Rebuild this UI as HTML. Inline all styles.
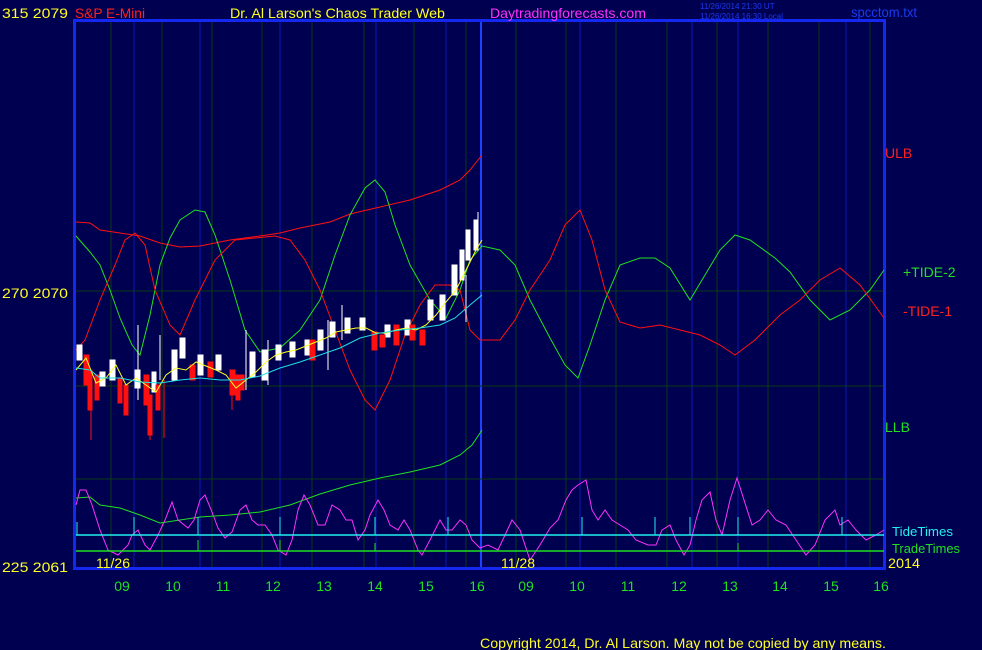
<!DOCTYPE html>
<html><head><meta charset="utf-8"><style>
html,body{margin:0;padding:0;background:#000050;width:982px;height:650px;overflow:hidden}
svg{display:block}
text{font-family:"Liberation Sans",sans-serif;font-size:14px}
</style></head><body>
<svg width="982" height="650" viewBox="0 0 982 650">
<rect width="982" height="650" fill="#000050"/>
<g stroke="#0a3a10" stroke-width="1">
<line x1="111" y1="21" x2="111" y2="568"/><line x1="162" y1="21" x2="162" y2="568"/><line x1="212" y1="21" x2="212" y2="568"/><line x1="262" y1="21" x2="262" y2="568"/><line x1="312" y1="21" x2="312" y2="568"/><line x1="364" y1="21" x2="364" y2="568"/><line x1="414" y1="21" x2="414" y2="568"/><line x1="466" y1="21" x2="466" y2="568"/><line x1="516" y1="21" x2="516" y2="568"/><line x1="566" y1="21" x2="566" y2="568"/><line x1="616" y1="21" x2="616" y2="568"/><line x1="667" y1="21" x2="667" y2="568"/><line x1="717" y1="21" x2="717" y2="568"/><line x1="768" y1="21" x2="768" y2="568"/><line x1="819" y1="21" x2="819" y2="568"/><line x1="870" y1="21" x2="870" y2="568"/>
</g>
<g stroke="#0a1ab0" stroke-width="1">
<line x1="134" y1="21" x2="134" y2="568"/><line x1="200" y1="21" x2="200" y2="568"/><line x1="280" y1="21" x2="280" y2="568"/><line x1="376" y1="21" x2="376" y2="568"/><line x1="446" y1="21" x2="446" y2="568"/><line x1="580" y1="21" x2="580" y2="568"/><line x1="692" y1="21" x2="692" y2="568"/><line x1="738" y1="21" x2="738" y2="568"/><line x1="846" y1="21" x2="846" y2="568"/>
</g>
<line x1="481" y1="21" x2="481" y2="568" stroke="#2040ff" stroke-width="2"/>
<g stroke="#0a3a10"><line x1="74" y1="291" x2="884" y2="291"/><line x1="74" y1="386" x2="884" y2="386"/><line x1="74" y1="479" x2="884" y2="479"/></g>
<rect x="74.5" y="20.5" width="810" height="548" fill="none" stroke="#1428f0" stroke-width="3"/>
<polyline fill="none" stroke="#ff1010" points="76,222 90,223 100,230 120,233 140,236 160,243 180,247 200,246 230,240 260,236 280,233 300,228 330,222 350,214 380,207 410,200 440,190 460,180 470,170 482,155"/>
<polyline fill="none" stroke="#20e020" points="76,498 90,497 100,505 120,508 140,515 160,523 180,520 200,517 230,515 260,512 290,505 320,494 350,485 380,478 410,472 440,465 460,455 472,445 482,430"/>
<polyline fill="none" stroke="#20e020" points="76,236 90,252 100,265 110,290 120,318 132,345 140,355 150,315 160,265 170,238 180,220 195,210 205,212 215,235 230,280 245,330 260,352 280,348 300,330 320,300 335,255 350,215 365,188 375,180 385,192 395,225 410,265 430,300 446,318 460,290 470,260 482,246 500,250 515,265 530,300 550,338 565,365 578,378 590,345 605,300 620,265 640,258 655,258 670,268 690,300 705,275 720,250 735,235 750,240 775,258 790,272 810,300 830,320 850,310 870,290 884,270"/>
<polyline fill="none" stroke="#ff1010" points="76,350 85,340 100,300 115,265 125,240 135,233 145,245 155,290 170,325 180,335 195,300 215,260 235,240 255,238 275,236 290,240 305,260 320,290 335,330 350,370 365,400 375,410 390,380 405,335 420,305 435,285 450,285 460,290 470,330 480,340 500,340 515,320 530,290 550,260 565,225 580,210 592,240 605,290 620,322 640,328 660,325 680,330 700,335 720,345 735,355 755,340 780,315 800,300 820,280 840,268 860,285 884,318"/>
<g fill="#fff" stroke="#fff" stroke-width="1">
<rect x="77" y="345" width="5" height="15"/><rect x="100" y="372" width="5" height="14"/><rect x="110" y="360" width="5" height="20"/><rect x="135" y="370" width="5" height="18"/><rect x="152" y="372" width="4" height="20"/><rect x="172" y="350" width="5" height="30"/><rect x="180" y="338" width="5" height="20"/><rect x="198" y="355" width="5" height="20"/><rect x="216" y="355" width="5" height="15"/><rect x="250" y="352" width="5" height="25"/><rect x="262" y="350" width="5" height="30"/><rect x="276" y="345" width="5" height="15"/><rect x="290" y="342" width="5" height="15"/><rect x="305" y="340" width="5" height="15"/><rect x="318" y="330" width="5" height="20"/><rect x="330" y="322" width="5" height="15"/><rect x="345" y="318" width="5" height="15"/><rect x="360" y="318" width="5" height="12"/><rect x="385" y="325" width="5" height="12"/><rect x="405" y="320" width="5" height="15"/><rect x="428" y="300" width="5" height="20"/><rect x="440" y="295" width="5" height="25"/><rect x="452" y="265" width="5" height="30"/><rect x="460" y="250" width="4" height="30"/><rect x="466" y="230" width="4" height="30"/><rect x="474" y="220" width="4" height="30"/>
<line x1="138" y1="325" x2="138" y2="400"/><line x1="160" y1="335" x2="160" y2="380"/><line x1="246" y1="330" x2="246" y2="390"/><line x1="268" y1="340" x2="268" y2="385"/><line x1="328" y1="320" x2="328" y2="370"/><line x1="342" y1="305" x2="342" y2="340"/><line x1="466" y1="275" x2="466" y2="322"/><line x1="478" y1="212" x2="478" y2="250"/></g>
<g fill="#ff1010" stroke="#ff1010" stroke-width="1">
<rect x="84" y="355" width="5" height="30"/><rect x="88" y="370" width="4" height="40"/><rect x="95" y="375" width="4" height="25"/><rect x="118" y="378" width="4" height="25"/><rect x="124" y="385" width="4" height="30"/><rect x="144" y="375" width="5" height="30"/><rect x="148" y="395" width="4" height="40"/><rect x="156" y="385" width="4" height="25"/><rect x="190" y="365" width="5" height="15"/><rect x="208" y="362" width="5" height="15"/><rect x="230" y="370" width="5" height="25"/><rect x="236" y="375" width="4" height="25"/><rect x="240" y="375" width="4" height="15"/><rect x="310" y="340" width="5" height="20"/><rect x="372" y="332" width="5" height="18"/><rect x="380" y="335" width="5" height="12"/><rect x="394" y="325" width="5" height="20"/><rect x="410" y="325" width="5" height="15"/><rect x="420" y="330" width="5" height="15"/>
<line x1="91" y1="380" x2="91" y2="440"/><line x1="150" y1="400" x2="150" y2="440"/><line x1="164" y1="380" x2="164" y2="438"/><line x1="232" y1="390" x2="232" y2="410"/></g>
<polyline fill="none" stroke="#ffff20" points="76,370 86,358 96,383 106,378 116,365 126,385 136,378 146,385 156,392 166,375 176,368 186,370 196,362 206,366 216,370 226,375 236,388 246,380 256,372 266,362 276,355 286,352 296,350 306,346 316,342 326,338 336,332 346,330 356,328 366,328 376,333 386,333 396,330 406,328 416,330 426,325 436,315 446,302 456,290 466,270 476,250 482,240"/>
<polyline fill="none" stroke="#20e0e0" points="76,368 90,370 100,378 120,378 140,382 160,383 180,380 200,378 220,380 240,380 260,376 280,368 300,362 320,355 340,348 360,338 380,333 400,330 420,328 440,325 455,318 470,305 482,295"/>
<polyline fill="none" stroke="#ff30ff" points="76,505 80,490 86,490 92,505 100,530 108,550 118,555 128,545 132,535 138,530 145,545 150,550 158,535 165,520 172,502 178,520 188,528 194,520 200,500 205,495 212,512 218,528 225,538 232,532 240,510 246,505 252,520 258,525 265,525 272,535 278,550 286,555 292,540 298,510 304,495 310,505 318,525 325,525 332,505 340,510 346,520 352,520 358,540 365,530 370,515 378,500 384,510 390,525 398,530 404,520 410,530 418,550 422,555 430,540 440,520 446,530 452,530 460,520 466,525 472,540 480,548 488,545 498,550 505,535 512,520 520,530 530,560 540,545 550,528 558,520 566,500 572,490 578,485 586,480 592,510 598,520 605,510 612,520 620,525 628,530 636,540 648,545 656,545 662,530 670,525 676,540 684,555 690,545 696,520 702,500 710,492 716,520 722,535 730,500 737,478 744,500 752,525 760,520 768,510 776,520 786,525 796,540 806,555 815,545 825,520 835,510 840,525 848,520 856,530 866,540 876,535 884,530"/>
<line x1="76" y1="535" x2="884" y2="535" stroke="#20f0f0" stroke-width="1.5"/>
<line x1="76" y1="551" x2="884" y2="551" stroke="#20e020" stroke-width="1.5"/>
<g stroke="#20f0f0"><line x1="77" y1="522" x2="77" y2="535"/><line x1="134" y1="517" x2="134" y2="535"/><line x1="198" y1="517" x2="198" y2="535"/><line x1="280" y1="517" x2="280" y2="535"/><line x1="375" y1="517" x2="375" y2="535"/><line x1="448" y1="517" x2="448" y2="535"/><line x1="582" y1="517" x2="582" y2="535"/><line x1="655" y1="517" x2="655" y2="535"/><line x1="690" y1="517" x2="690" y2="535"/><line x1="738" y1="517" x2="738" y2="535"/><line x1="842" y1="517" x2="842" y2="535"/></g>
<g stroke="#20e020"><line x1="198" y1="540" x2="198" y2="551"/><line x1="280" y1="540" x2="280" y2="551"/><line x1="375" y1="543" x2="375" y2="551"/><line x1="738" y1="543" x2="738" y2="551"/></g>
<text x="2" y="18" fill="#ffff20" textLength="66" lengthAdjust="spacingAndGlyphs">315  2079</text>
<text x="75" y="18" fill="#ff2020" textLength="70" lengthAdjust="spacingAndGlyphs">S&amp;P E-Mini</text>
<text x="230" y="18" fill="#ffff20" textLength="215" lengthAdjust="spacingAndGlyphs">Dr. Al Larson's Chaos Trader Web</text>
<text x="490" y="18" fill="#ff30ff" textLength="156" lengthAdjust="spacingAndGlyphs">Daytradingforecasts.com</text>
<text x="700" y="9" fill="#1a3af0" style="font-size:8px">11/26/2014 21:30 UT</text>
<text x="700" y="19" fill="#1a3af0" style="font-size:8px">11/26/2014 16:30 Local</text>
<text x="851" y="17" fill="#1a3af0" textLength="66" lengthAdjust="spacingAndGlyphs">spcctom.txt</text>
<text x="2" y="298" fill="#ffff20" textLength="66" lengthAdjust="spacingAndGlyphs">270  2070</text>
<text x="2" y="572" fill="#ffff20" textLength="66" lengthAdjust="spacingAndGlyphs">225  2061</text>
<text x="885" y="158" fill="#ff2020">ULB</text>
<text x="903" y="277" fill="#20e020">+TIDE-2</text>
<text x="903" y="316" fill="#ff2020">-TIDE-1</text>
<text x="885" y="432" fill="#20e020">LLB</text>
<text x="892" y="536" fill="#20f0f0" style="font-size:13px" textLength="61" lengthAdjust="spacingAndGlyphs">TideTimes</text>
<text x="892" y="553" fill="#20e020" style="font-size:13px" textLength="68" lengthAdjust="spacingAndGlyphs">TradeTimes</text>
<text x="96" y="568" fill="#ffff20" textLength="34" lengthAdjust="spacingAndGlyphs">11/26</text>
<text x="501" y="568" fill="#ffff20" textLength="34" lengthAdjust="spacingAndGlyphs">11/28</text>
<text x="888" y="568" fill="#ffff20" textLength="32" lengthAdjust="spacingAndGlyphs">2014</text>
<g fill="#20e020" text-anchor="middle" style="font-size:15px"><text x="122" y="591">09</text><text x="173" y="591">10</text><text x="223" y="591">11</text><text x="273" y="591">12</text><text x="324" y="591">13</text><text x="375" y="591">14</text><text x="426" y="591">15</text><text x="477" y="591">16</text><text x="526" y="591">09</text><text x="577" y="591">10</text><text x="628" y="591">11</text><text x="679" y="591">12</text><text x="730" y="591">13</text><text x="780" y="591">14</text><text x="831" y="591">15</text><text x="881" y="591">16</text></g>
<text x="480" y="648" fill="#ffff20" textLength="406" lengthAdjust="spacingAndGlyphs">Copyright 2014, Dr. Al Larson. May not be copied by any means.</text>
</svg>
</body></html>
